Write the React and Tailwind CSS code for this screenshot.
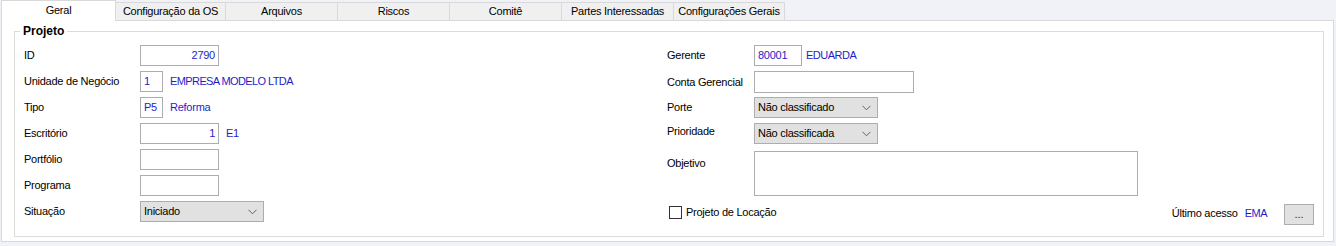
import React from "react";

const blue = "text-[#1e1ec8]";

function Chevron() {
  return (
    <svg width="9" height="6" viewBox="0 0 9 6" className="shrink-0">
      <polyline points="0.5,0.8 4.5,4.8 8.5,0.8" fill="none" stroke="#606060" strokeWidth="1" />
    </svg>
  );
}

function Select({ value, w }) {
  return (
    <div className={`${w} h-[21px] bg-[#e1e1e1] border border-[#adadad] flex items-center justify-between pl-[3px] pr-[6px]`}>
      <span>{value}</span>
      <Chevron />
    </div>
  );
}

function Input({ w, h = "h-[21px]", value, right }) {
  return (
    <div
      className={`${w} ${h} bg-white border border-[#adadad] flex items-center ${
        right ? "justify-end pr-[3px]" : "pl-[3px]"
      } ${blue}`}
    >
      {value}
    </div>
  );
}

function Row({ label, children, lw = "w-[116px]" }) {
  return (
    <div className="h-[21px] flex items-center">
      <div className={`${lw} shrink-0`}>{label}</div>
      {children}
    </div>
  );
}

const tabs = [
  { t: "Configuração da OS", w: "w-[110px]" },
  { t: "Arquivos", w: "w-[112px]" },
  { t: "Riscos", w: "w-[112px]" },
  { t: "Comitê", w: "w-[112px]" },
  { t: "Partes Interessadas", w: "w-[112px]" },
  { t: "Configurações Gerais", w: "w-[111px]" },
];

export default function App() {
  return (
    <div className="w-[1336px] h-[246px] bg-[#f1f2f7] font-['Liberation_Sans',Arial,sans-serif] text-[11px] tracking-[-0.25px] text-black overflow-hidden">
      {/* Tabs */}
      <div className="flex items-end h-[21px] pl-[1px] w-[1334px]">
        <div className="w-[115px] h-[21px] bg-white border-l border-r border-t border-[#d9d9d9] flex items-center justify-center pb-[1px]">
          Geral
        </div>
        {tabs.map((tb) => (
          <div
            key={tb.t}
            className={`${tb.w} h-[19px] bg-[#f0f0f0] border-t border-r border-b border-[#d9d9d9] flex items-center justify-center`}
          >
            {tb.t}
          </div>
        ))}
        <div className="flex-1 h-[1px] bg-[#d9d9d9]" />
      </div>

      {/* Panel */}
      <div className="ml-[1px] w-[1333px] bg-white border-l border-r border-b border-[#d9d9d9] pt-[3px] pb-[4px] pl-[12px] pr-[9px]">
        <fieldset className="border border-[#dcdcdc] px-0 pt-[7px] pb-[11px] m-0">
          <legend className="ml-[5px] px-[3px] font-bold text-[12px] leading-[14px] tracking-normal">Projeto</legend>
          <div className="flex pl-[9px] pr-[9px]">
            {/* Left column */}
            <div className="w-[643px] shrink-0 flex flex-col gap-[5px]">
              <Row label="ID">
                <Input w="w-[79px]" value="2790" right />
              </Row>
              <Row label="Unidade de Negócio">
                <Input w="w-[23px]" value="1" />
                <span className={`ml-[7px] tracking-[-0.6px] ${blue}`}>EMPRESA MODELO LTDA</span>
              </Row>
              <Row label="Tipo">
                <Input w="w-[23px]" value="P5" />
                <span className={`ml-[7px] ${blue}`}>Reforma</span>
              </Row>
              <Row label="Escritório">
                <Input w="w-[79px]" value="1" right />
                <span className={`ml-[7px] ${blue}`}>E1</span>
              </Row>
              <Row label="Portfólio">
                <Input w="w-[79px]" />
              </Row>
              <Row label="Programa">
                <Input w="w-[79px]" />
              </Row>
              <Row label="Situação">
                <Select w="w-[124px]" value="Iniciado" />
              </Row>
            </div>

            {/* Right column */}
            <div className="flex-1 flex flex-col">
              <Row label="Gerente" lw="w-[87px]">
                <Input w="w-[48px]" value="80001" />
                <span className={`ml-[4px] tracking-[-0.5px] ${blue}`}>EDUARDA</span>
              </Row>
              <div className="h-[22px] mt-[5px] flex items-center">
                <div className="w-[87px] shrink-0">Conta Gerencial</div>
                <Input w="w-[160px]" h="h-[22px]" />
              </div>
              <div className="mt-[4px]">
                <Row label="Porte" lw="w-[87px]">
                  <Select w="w-[124px]" value="Não classificado" />
                </Row>
              </div>
              <div className="mt-[5px] h-[21px] flex items-start">
                <div className="w-[87px] shrink-0 leading-[13px] pt-[2px]">Prioridade</div>
                <Select w="w-[124px]" value="Não classificada" />
              </div>
              <div className="mt-[7px] h-[45px] flex items-start">
                <div className="w-[87px] shrink-0 pt-[4px]">Objetivo</div>
                <div className="w-[384px] h-[45px] border border-[#adadad] bg-white" />
              </div>
              <div className="mt-[5px] h-[24px] flex items-start">
                <div className="ml-[2px] mt-[5px] w-[13px] h-[13px] border border-[#333333] bg-white shrink-0" />
                <span className="ml-[4px] mt-[4px] leading-[14px]">Projeto de Locação</span>
                <div className="ml-auto flex items-start">
                  <span className="mt-[5px] leading-[14px]">Último acesso</span>
                  <span className={`ml-[7px] mt-[5px] leading-[14px] tracking-[-0.5px] ${blue}`}>EMA</span>
                  <div className="ml-[17px] mt-[3px] w-[30px] h-[21px] bg-[#e1e1e1] border border-[#adadad] flex items-center justify-center text-[#1a1a60] tracking-normal">
                    ...
                  </div>
                </div>
              </div>
            </div>
          </div>
        </fieldset>
      </div>
    </div>
  );
}
